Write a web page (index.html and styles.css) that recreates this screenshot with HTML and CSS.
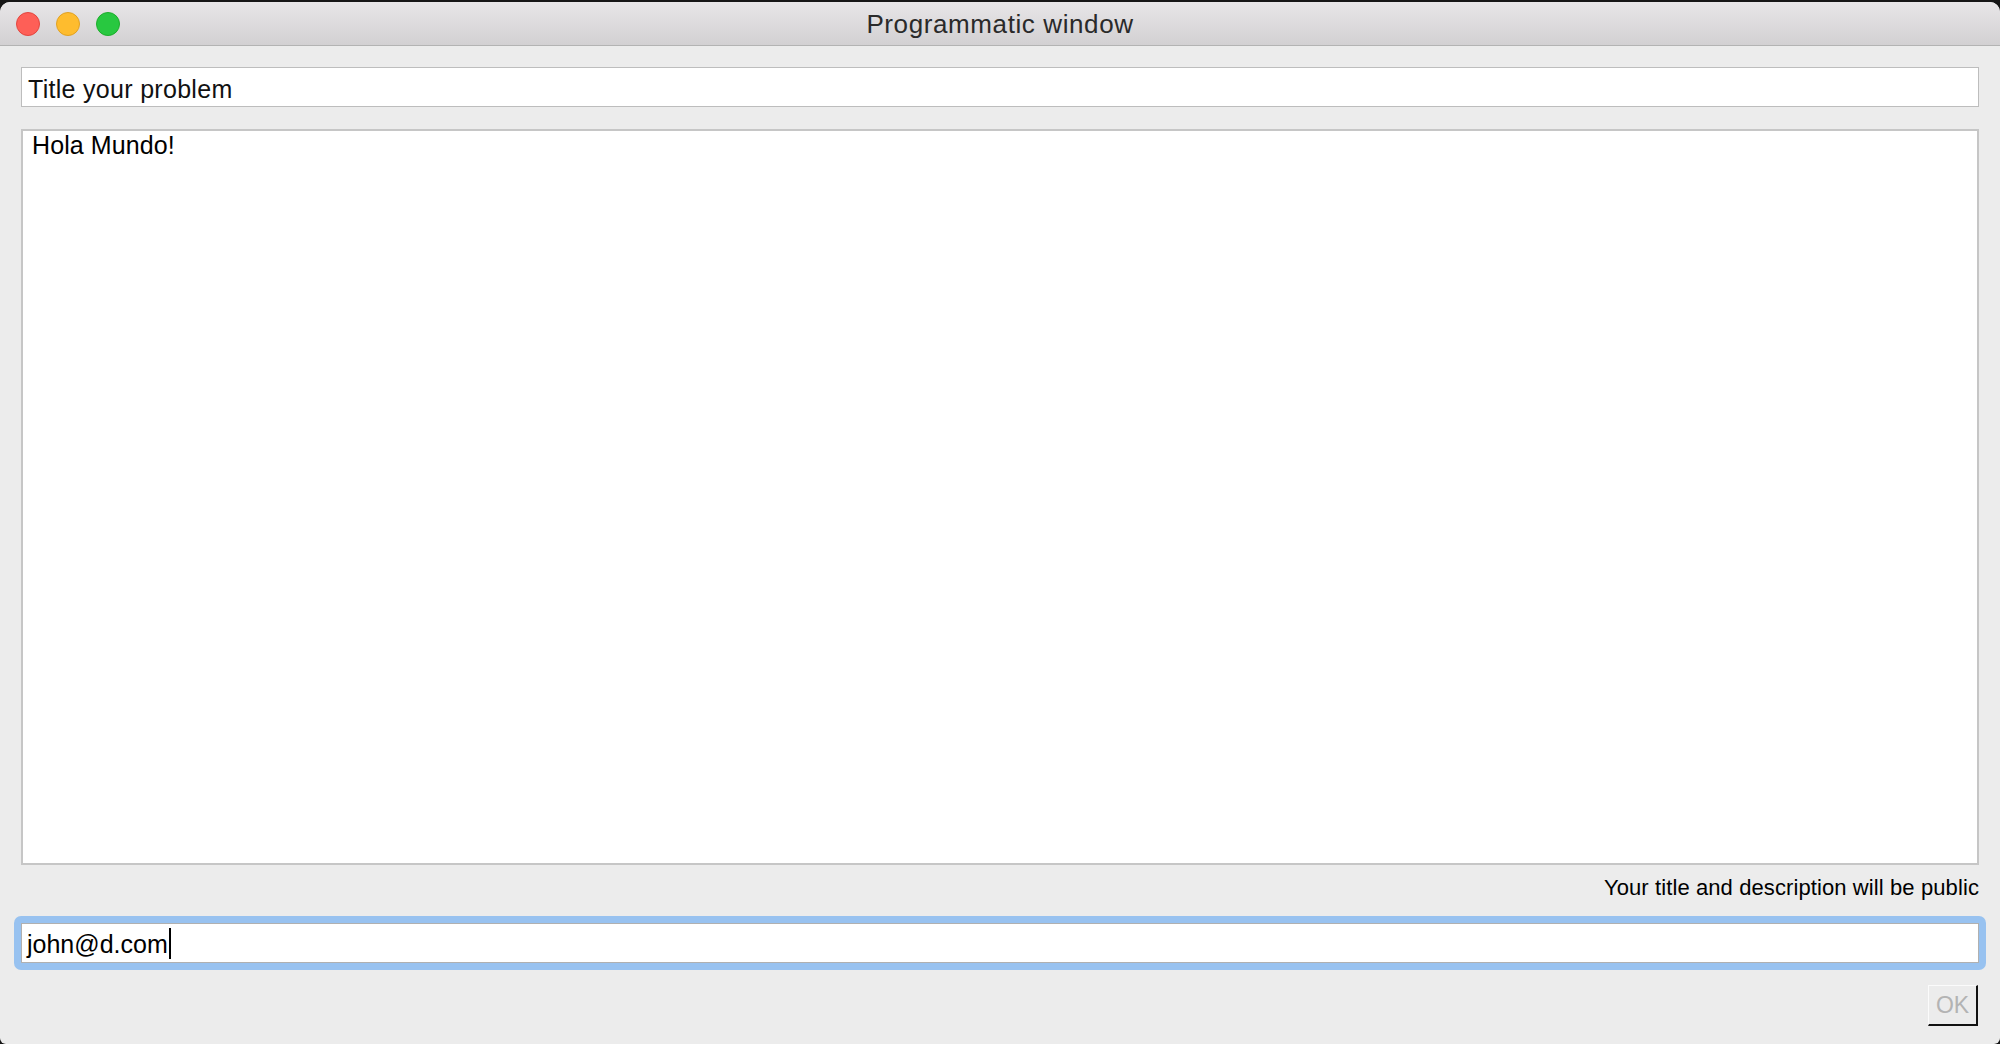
FILE: index.html
```html
<!DOCTYPE html>
<html>
<head>
<meta charset="utf-8">
<link rel="stylesheet" href="styles.css">
<title>Programmatic window</title>
</head>
<body>
<div class="window">
  <div class="titlebar">
    <div class="lights">
      <span class="light red"></span>
      <span class="light yellow"></span>
      <span class="light green"></span>
    </div>
    <div class="title">Programmatic window</div>
  </div>
  <div class="content">
    <div class="field title-field">Title your problem</div>
    <div class="textarea">Hola Mundo!</div>
    <div class="note">Your title and description will be public</div>
    <div class="focus-ring">
      <div class="field email-field">john@d.com<span class="caret"></span></div>
    </div>
    <div class="actions">
      <div class="btn">OK</div>
    </div>
  </div>
</div>
</body>
</html>
```

FILE: styles.css
```css
html, body {
  margin: 0;
  padding: 0;
}
body {
  width: 2000px;
  height: 1044px;
  overflow: hidden;
  background: #161616;
  font-family: "Liberation Sans", Arial, sans-serif;
}
.window {
  margin-top: 2px;
  width: 2000px;
  height: 1042px;
  background: #ececec;
  border-radius: 10px 10px 6px 6px;
  overflow: hidden;
  display: flex;
  flex-direction: column;
}
.titlebar {
  height: 43px;
  flex: none;
  background: linear-gradient(#e8e6e8, #d2d0d2);
  border-bottom: 1px solid #b3b3b3;
  display: flex;
  align-items: center;
  position: relative;
}
.lights {
  display: flex;
  gap: 16px;
  padding-left: 16px;
  position: absolute;
  left: 0;
  top: 10px;
}
.light {
  width: 22px;
  height: 22px;
  border-radius: 50%;
  border: 1px solid;
}
.red { background: #fe5f57; border-color: #e2463f; }
.yellow { background: #febc2e; border-color: #e0a123; }
.green { background: #28c840; border-color: #1dad2b; }
.title {
  flex: 1;
  text-align: center;
  font-size: 26px;
  line-height: 43px;
  padding-top: 2px;
  color: #2a2a2a;
  letter-spacing: 0.6px;
}
.content {
  padding: 21px 21px 0 21px;
  display: flex;
  flex-direction: column;
}
.field {
  background: #fff;
  border: 1px solid #bdbdbd;
  height: 38px;
  box-sizing: content-box;
  font-size: 25px;
  line-height: 28px;
  color: #111;
  white-space: nowrap;
}
.title-field {
  padding: 7px 0 3px 6px;
  height: 28px;
  letter-spacing: 0.3px;
}
.textarea {
  margin-top: 22px;
  height: 732px;
  background: #fff;
  border: 2px solid #c6c6c6;
  padding: 0 0 0 9px;
  font-size: 25px;
  line-height: 28px;
  color: #000;
  letter-spacing: 0.1px;
}
.note {
  margin-top: 10px;
  text-align: right;
  font-size: 22px;
  line-height: 26px;
  color: #000;
  letter-spacing: 0.1px;
}
.focus-ring {
  margin: 15px -7px 0 -7px;
  padding: 7px;
  background: #98c2f0;
  border-radius: 7px;
}
.email-field {
  border-color: #b0b0b0;
  padding: 6px 0 4px 5px;
  height: 28px;
  color: #000;
  display: flex;
  align-items: flex-start;
}
.caret {
  display: inline-block;
  width: 2px;
  height: 31px;
  margin-top: -2px;
  margin-left: 1px;
  background: #000;
}
.actions {
  margin-top: 15px;
  display: flex;
  justify-content: flex-end;
  padding-right: 1px;
}
.btn {
  width: 47px;
  height: 38px;
  border-top: 1px solid #fbfbfb;
  border-left: 1px solid #fbfbfb;
  border-right: 2px solid #111;
  border-bottom: 2px solid #111;
  background: #ececec;
  color: #b3b3b3;
  font-size: 23px;
  line-height: 38px;
  text-align: center;
}
```
